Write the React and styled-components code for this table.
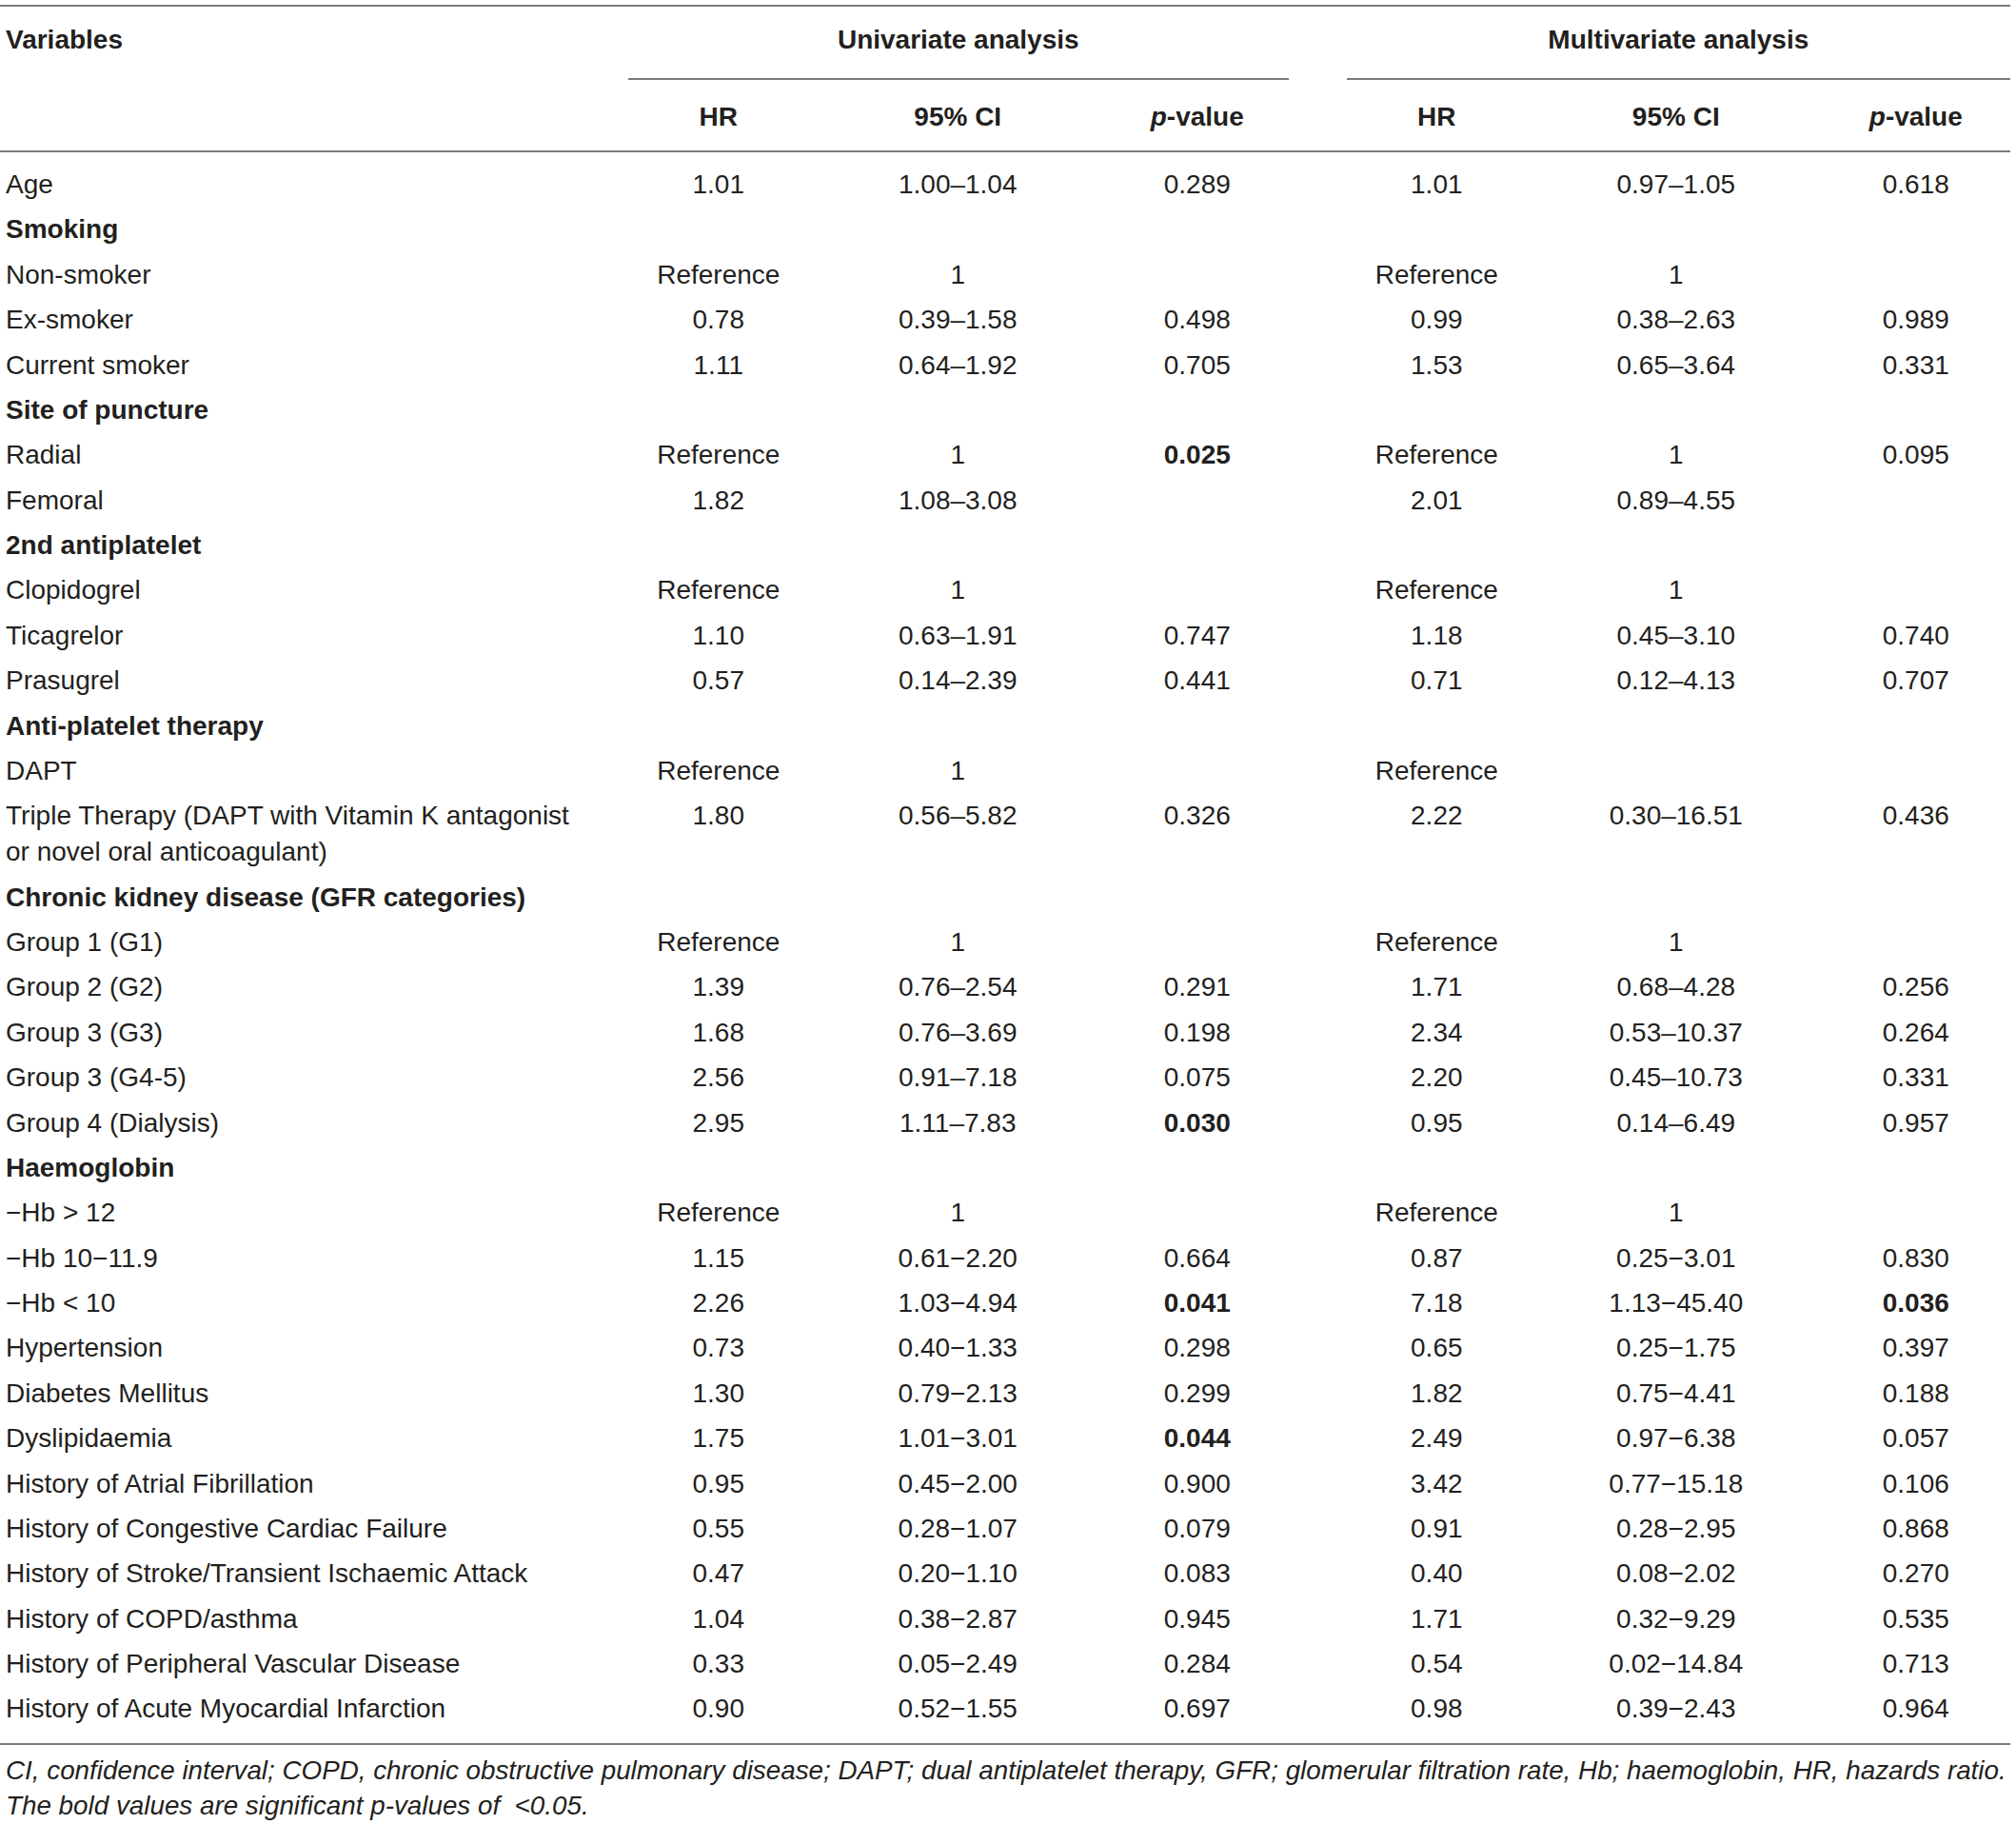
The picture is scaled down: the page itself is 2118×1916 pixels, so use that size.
import React from 'react';
import styled, { createGlobalStyle } from 'styled-components';

const GlobalStyle = createGlobalStyle`
  html, body {
    margin: 0;
    padding: 0;
    background: #ffffff;
  }
  body {
    font-family: "Liberation Sans", Arial, sans-serif;
    color: #231f20;
  }
`;

// "**" marks a bold (significant) value
const rows = [
  ['Age', '1.01', '1.00–1.04', '0.289', '1.01', '0.97–1.05', '0.618'],
  { section: 'Smoking' },
  ['Non-smoker', 'Reference', '1', '', 'Reference', '1', ''],
  ['Ex-smoker', '0.78', '0.39–1.58', '0.498', '0.99', '0.38–2.63', '0.989'],
  ['Current smoker', '1.11', '0.64–1.92', '0.705', '1.53', '0.65–3.64', '0.331'],
  { section: 'Site of puncture' },
  ['Radial', 'Reference', '1', '**0.025', 'Reference', '1', '0.095'],
  ['Femoral', '1.82', '1.08–3.08', '', '2.01', '0.89–4.55', ''],
  { section: '2nd antiplatelet' },
  ['Clopidogrel', 'Reference', '1', '', 'Reference', '1', ''],
  ['Ticagrelor', '1.10', '0.63–1.91', '0.747', '1.18', '0.45–3.10', '0.740'],
  ['Prasugrel', '0.57', '0.14–2.39', '0.441', '0.71', '0.12–4.13', '0.707'],
  { section: 'Anti-platelet therapy' },
  ['DAPT', 'Reference', '1', '', 'Reference', '', ''],
  ['Triple Therapy (DAPT with Vitamin K antagonist\nor novel oral anticoagulant)', '1.80', '0.56–5.82', '0.326', '2.22', '0.30–16.51', '0.436'],
  { section: 'Chronic kidney disease (GFR categories)' },
  ['Group 1 (G1)', 'Reference', '1', '', 'Reference', '1', ''],
  ['Group 2 (G2)', '1.39', '0.76–2.54', '0.291', '1.71', '0.68–4.28', '0.256'],
  ['Group 3 (G3)', '1.68', '0.76–3.69', '0.198', '2.34', '0.53–10.37', '0.264'],
  ['Group 3 (G4-5)', '2.56', '0.91–7.18', '0.075', '2.20', '0.45–10.73', '0.331'],
  ['Group 4 (Dialysis)', '2.95', '1.11–7.83', '**0.030', '0.95', '0.14–6.49', '0.957'],
  { section: 'Haemoglobin' },
  ['−Hb > 12', 'Reference', '1', '', 'Reference', '1', ''],
  ['−Hb 10−11.9', '1.15', '0.61−2.20', '0.664', '0.87', '0.25−3.01', '0.830'],
  ['−Hb < 10', '2.26', '1.03−4.94', '**0.041', '7.18', '1.13−45.40', '**0.036'],
  ['Hypertension', '0.73', '0.40−1.33', '0.298', '0.65', '0.25−1.75', '0.397'],
  ['Diabetes Mellitus', '1.30', '0.79−2.13', '0.299', '1.82', '0.75−4.41', '0.188'],
  ['Dyslipidaemia', '1.75', '1.01−3.01', '**0.044', '2.49', '0.97−6.38', '0.057'],
  ['History of Atrial Fibrillation', '0.95', '0.45−2.00', '0.900', '3.42', '0.77−15.18', '0.106'],
  ['History of Congestive Cardiac Failure', '0.55', '0.28−1.07', '0.079', '0.91', '0.28−2.95', '0.868'],
  ['History of Stroke/Transient Ischaemic Attack', '0.47', '0.20−1.10', '0.083', '0.40', '0.08−2.02', '0.270'],
  ['History of COPD/asthma', '1.04', '0.38−2.87', '0.945', '1.71', '0.32−9.29', '0.535'],
  ['History of Peripheral Vascular Disease', '0.33', '0.05−2.49', '0.284', '0.54', '0.02−14.84', '0.713'],
  ['History of Acute Myocardial Infarction', '0.90', '0.52−1.55', '0.697', '0.98', '0.39−2.43', '0.964'],
];

const Page = styled.div`
  width: 2112px;
  padding-top: 5px;
`;

const Table = styled.table`
  width: 2112px;
  border-collapse: collapse;
  table-layout: fixed;
  font-size: 28px;
  line-height: 38px;
`;

const Col = styled.col`
  width: ${(p) => p.$w}px;
`;

const TopRow = styled.tr`
  border-top: 2px solid #7b7b7b;
`;

const SubRow = styled.tr`
  border-bottom: 2px solid #7b7b7b;
`;

const VarHead = styled.th`
  text-align: left;
  vertical-align: top;
  font-weight: 700;
  padding: 16px 0 0 6px;
`;

const GroupHead = styled.th`
  font-weight: 700;
  padding: 16px 0 0;
  vertical-align: top;
`;

const GroupTitle = styled.div`
  margin: 0 ${(p) => p.$right}px 21px 31px;
  text-align: center;
`;

const GroupRule = styled.div`
  height: 2px;
  background: #7b7b7b;
  margin: 0 ${(p) => p.$right}px 0 31px;
`;

const SubHead = styled.th`
  font-weight: 700;
  text-align: center;
  padding: 20px 0 16px ${(p) => p.$shift || 0}px;
`;

const Body = styled.tbody`
  tr:first-child td {
    padding-top: 15px;
  }
  tr:last-child td {
    padding-bottom: 17px;
    border-bottom: 2px solid #7b7b7b;
  }
`;

const Label = styled.td`
  text-align: left;
  vertical-align: top;
  padding: 4.7px 0 4.7px 6px;
  white-space: pre-line;
  font-weight: ${(p) => (p.$section ? 700 : 400)};
`;

const Cell = styled.td`
  text-align: center;
  vertical-align: top;
  padding: 4.7px 0 4.7px ${(p) => p.$shift || 0}px;
  font-weight: ${(p) => (p.$bold ? 700 : 400)};
  white-space: nowrap;
`;

const Notes = styled.div`
  padding: 8px 0 0 6px;
  font-size: 27.8px;
  line-height: 37px;
  font-style: italic;
  white-space: nowrap;
`;

const PValue = () => (
  <>
    <i>p</i>-value
  </>
);

const subHeads = ['HR', '95% CI', <PValue key="p1" />, 'HR', '95% CI', <PValue key="p2" />];

export default function App() {
  return (
    <Page>
      <GlobalStyle />
      <Table>
        <colgroup>
          <Col $w={629} />
          <Col $w={251.5} />
          <Col $w={251.5} />
          <Col $w={251.5} />
          <Col $w={251.5} />
          <Col $w={251.5} />
          <Col $w={225.5} />
        </colgroup>
        <thead>
          <TopRow>
            <VarHead rowSpan={2}>Variables</VarHead>
            <GroupHead colSpan={3}>
              <GroupTitle $right={30}>Univariate analysis</GroupTitle>
              <GroupRule $right={30} />
            </GroupHead>
            <GroupHead colSpan={3}>
              <GroupTitle $right={0}>Multivariate analysis</GroupTitle>
              <GroupRule $right={0} />
            </GroupHead>
          </TopRow>
          <SubRow>
            {subHeads.map((h, i) => (
              <SubHead key={i} $shift={i === 5 ? 27 : 0}>
                {h}
              </SubHead>
            ))}
          </SubRow>
        </thead>
        <Body>
          {rows.map((row, i) =>
            row.section ? (
              <tr key={i}>
                <Label $section colSpan={7}>
                  {row.section}
                </Label>
              </tr>
            ) : (
              <tr key={i}>
                <Label>{row[0]}</Label>
                {row.slice(1).map((v, j) => {
                  const bold = v.startsWith('**');
                  return (
                    <Cell key={j} $bold={bold} $shift={j === 5 ? 27 : 0}>
                      {bold ? v.slice(2) : v}
                    </Cell>
                  );
                })}
              </tr>
            )
          )}
        </Body>
      </Table>
      <Notes>
        CI, confidence interval; COPD, chronic obstructive pulmonary disease; DAPT; dual antiplatelet
        therapy, GFR; glomerular filtration rate, Hb; haemoglobin, HR, hazards ratio.
        <br />
        The bold values are significant p-values of&nbsp; &lt;0.05.
      </Notes>
    </Page>
  );
}
